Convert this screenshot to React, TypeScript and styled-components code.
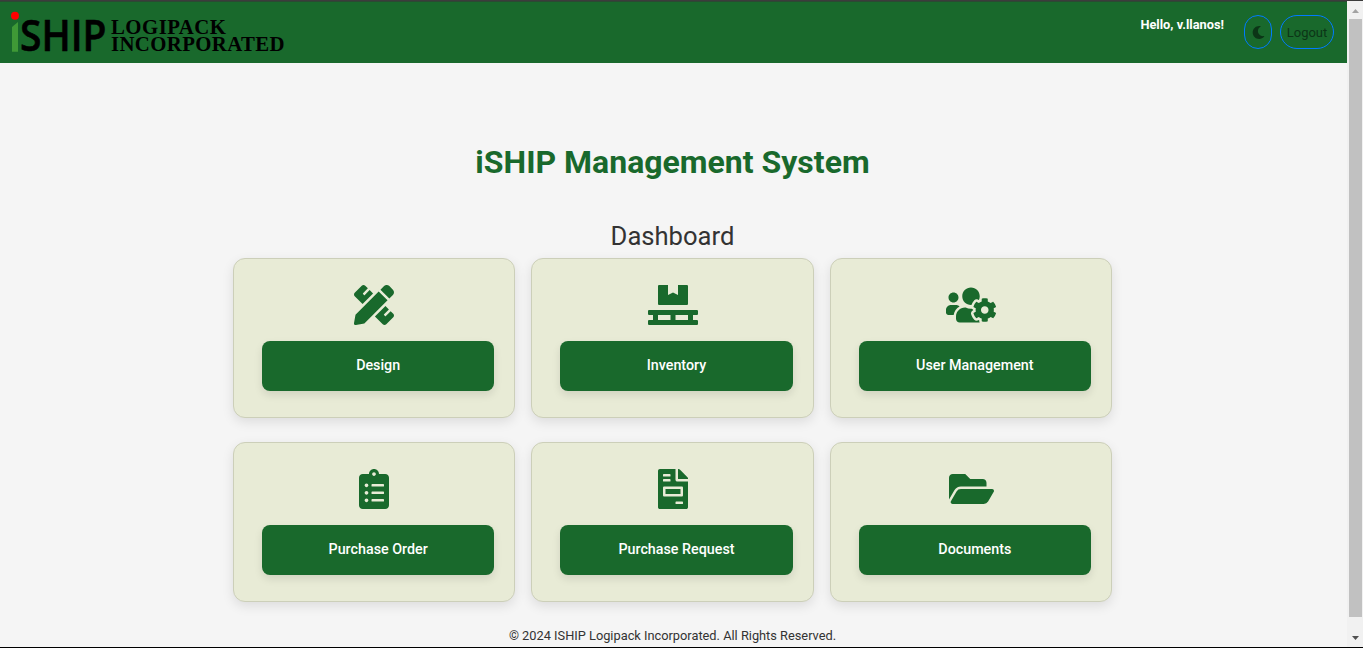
import React from 'react';
import styled, { createGlobalStyle } from 'styled-components';
import {
  FaPencilRuler,
  FaPallet,
  FaUsersCog,
  FaClipboardList,
  FaFileInvoice,
  FaFolderOpen,
  FaMoon,
} from 'react-icons/fa';
import type { IconType } from 'react-icons';

const green = '#19692c';

const GlobalStyle = createGlobalStyle`
  * { box-sizing: border-box; }
  body {
    margin: 0;
    overflow: hidden;
    background: #f5f5f5;
    color: #333;
    font-family: Roboto, sans-serif;
  }
`;

const Window = styled.div`
  display: flex;
  height: 648px;
  border-top: 1px solid #3c3c3c;
  border-bottom: 1px solid #000;
`;

const Page = styled.div`
  flex: 1;
  display: flex;
  flex-direction: column;
`;

const Header = styled.header`
  display: flex;
  justify-content: space-between;
  height: 62px;
  padding: 0 13px 0 8px;
  background: ${green};
  border-top: 1px solid #2b4a33;
`;

const Logo = styled.svg`
  display: block;
  width: 282px;
  height: 61px;
  overflow: visible;
`;

const Actions = styled.div`
  display: flex;
  padding-top: 13px;
`;

const Greeting = styled.span`
  margin-right: 20px;
  color: #fff;
  font-size: 12.8px;
  font-weight: 700;
  line-height: 20px;
`;

const PillButton = styled.button<{ $width: number }>`
  display: flex;
  align-items: center;
  justify-content: center;
  width: ${({ $width }) => $width}px;
  height: 34px;
  padding: 0;
  border: 1px solid #007bff;
  border-radius: 20px;
  background: transparent;
  color: #0c3517;
  font-family: inherit;
  font-size: 13px;

  & + & {
    margin-left: 8px;
  }
`;

const Main = styled.main`
  display: flex;
  flex-direction: column;
  align-items: center;
  width: 1345px;
`;

const Title = styled.h1`
  margin: 80px 0 0;
  color: ${green};
  font-size: 32px;
  font-weight: 700;
  line-height: 38px;
`;

const Subtitle = styled.h2`
  margin: 40px 0 0;
  font-size: 25.6px;
  font-weight: 400;
  line-height: 31px;
`;

const Grid = styled.div`
  display: grid;
  grid-template-columns: repeat(3, 1fr);
  gap: 24px 16px;
  width: 879px;
  margin-top: 6px;
`;

const Card = styled.section`
  display: flex;
  flex-direction: column;
  align-items: center;
  height: 160px;
  padding: 26px 24px 0;
  border: 1px solid #cccfb9;
  border-radius: 12px;
  background: #e8ebd6;
  box-shadow: 0 4px 12px rgba(0, 0, 0, 0.1);
  color: ${green};
`;

const CardIcon = styled.div<{ $width: number }>`
  display: flex;
  width: ${({ $width }) => $width}px;
  height: 40px;
  margin-left: 0.6px;

  svg {
    width: 100%;
    height: 100%;
  }
`;

const CardButton = styled.button`
  align-self: stretch;
  height: 50px;
  margin: 16px -4px 0 4px;
  padding: 0 0 2px;
  border: 0;
  border-radius: 8px;
  background: ${green};
  box-shadow: 0 4px 8px rgba(0, 0, 0, 0.1);
  color: #fff;
  font-family: inherit;
  font-size: 14.3px;
  font-weight: 500;
`;

const Footer = styled.footer`
  margin-top: 26px;
  font-size: 12.8px;
  line-height: 16px;
`;

const Scrollbar = styled.div`
  display: flex;
  flex-direction: column;
  align-items: center;
  width: 16px;
  padding-top: 1px;
  background: #f1f1f1;
`;

const ScrollArrow = styled.svg`
  display: block;
  flex: none;
  width: 16px;
  height: 17px;
`;

const Thumb = styled.div`
  flex: none;
  width: 13px;
  height: 598px;
  background: #c1c1c1;
`;

const modules: { label: string; icon: IconType; iconWidth: number }[] = [
  { label: 'Design', icon: FaPencilRuler, iconWidth: 40 },
  { label: 'Inventory', icon: FaPallet, iconWidth: 50 },
  { label: 'User Management', icon: FaUsersCog, iconWidth: 50 },
  { label: 'Purchase Order', icon: FaClipboardList, iconWidth: 30 },
  { label: 'Purchase Request', icon: FaFileInvoice, iconWidth: 30 },
  { label: 'Documents', icon: FaFolderOpen, iconWidth: 45 },
];

function BrandLogo() {
  return (
    <Logo viewBox="8 2 282 61" role="img" aria-label="iSHIP Logipack Incorporated">
      <circle cx="15" cy="15.8" r="4" fill="#f00" />
      <path d="M12 27L18 22V51.8H12Z" fill="#3f9936" />
      <text x="20" y="51" fontFamily="'Open Sans', sans-serif" fontWeight="600" fontSize="42.5" textLength="86.5" lengthAdjust="spacingAndGlyphs" stroke="#000" strokeWidth="0.6">SHIP</text>
      <g fontFamily="'Liberation Serif', serif" fontWeight="700" fontSize="20.8">
        <text x="111" y="34" textLength="115" lengthAdjust="spacing">LOGIPACK</text>
        <text x="111" y="51" textLength="173.5" lengthAdjust="spacing">INCORPORATED</text>
      </g>
    </Logo>
  );
}

export default function App() {
  return (
    <>
      <GlobalStyle />
      <Window>
        <Page>
          <Header>
            <BrandLogo />
            <Actions>
              <Greeting>Hello, v.llanos!</Greeting>
              <PillButton $width={28} aria-label="Toggle dark mode">
                <FaMoon size={13} />
              </PillButton>
              <PillButton $width={54}>Logout</PillButton>
            </Actions>
          </Header>
          <Main>
            <Title>iSHIP Management System</Title>
            <Subtitle>Dashboard</Subtitle>
            <Grid>
              {modules.map(({ label, icon: Icon, iconWidth }) => (
                <Card key={label}>
                  <CardIcon $width={iconWidth}>
                    <Icon />
                  </CardIcon>
                  <CardButton>{label}</CardButton>
                </Card>
              ))}
            </Grid>
            <Footer>© 2024 ISHIP Logipack Incorporated. All Rights Reserved.</Footer>
          </Main>
        </Page>
        <Scrollbar>
          <ScrollArrow viewBox="0 0 16 17">
            <path d="M5 11L8.5 7L12 11Z" fill="#a3a3a3" />
          </ScrollArrow>
          <Thumb />
          <ScrollArrow viewBox="0 0 16 17" overflow="visible">
            <path d="M5 19L8.5 23L12 19Z" fill="#505050" />
          </ScrollArrow>
        </Scrollbar>
      </Window>
    </>
  );
}
